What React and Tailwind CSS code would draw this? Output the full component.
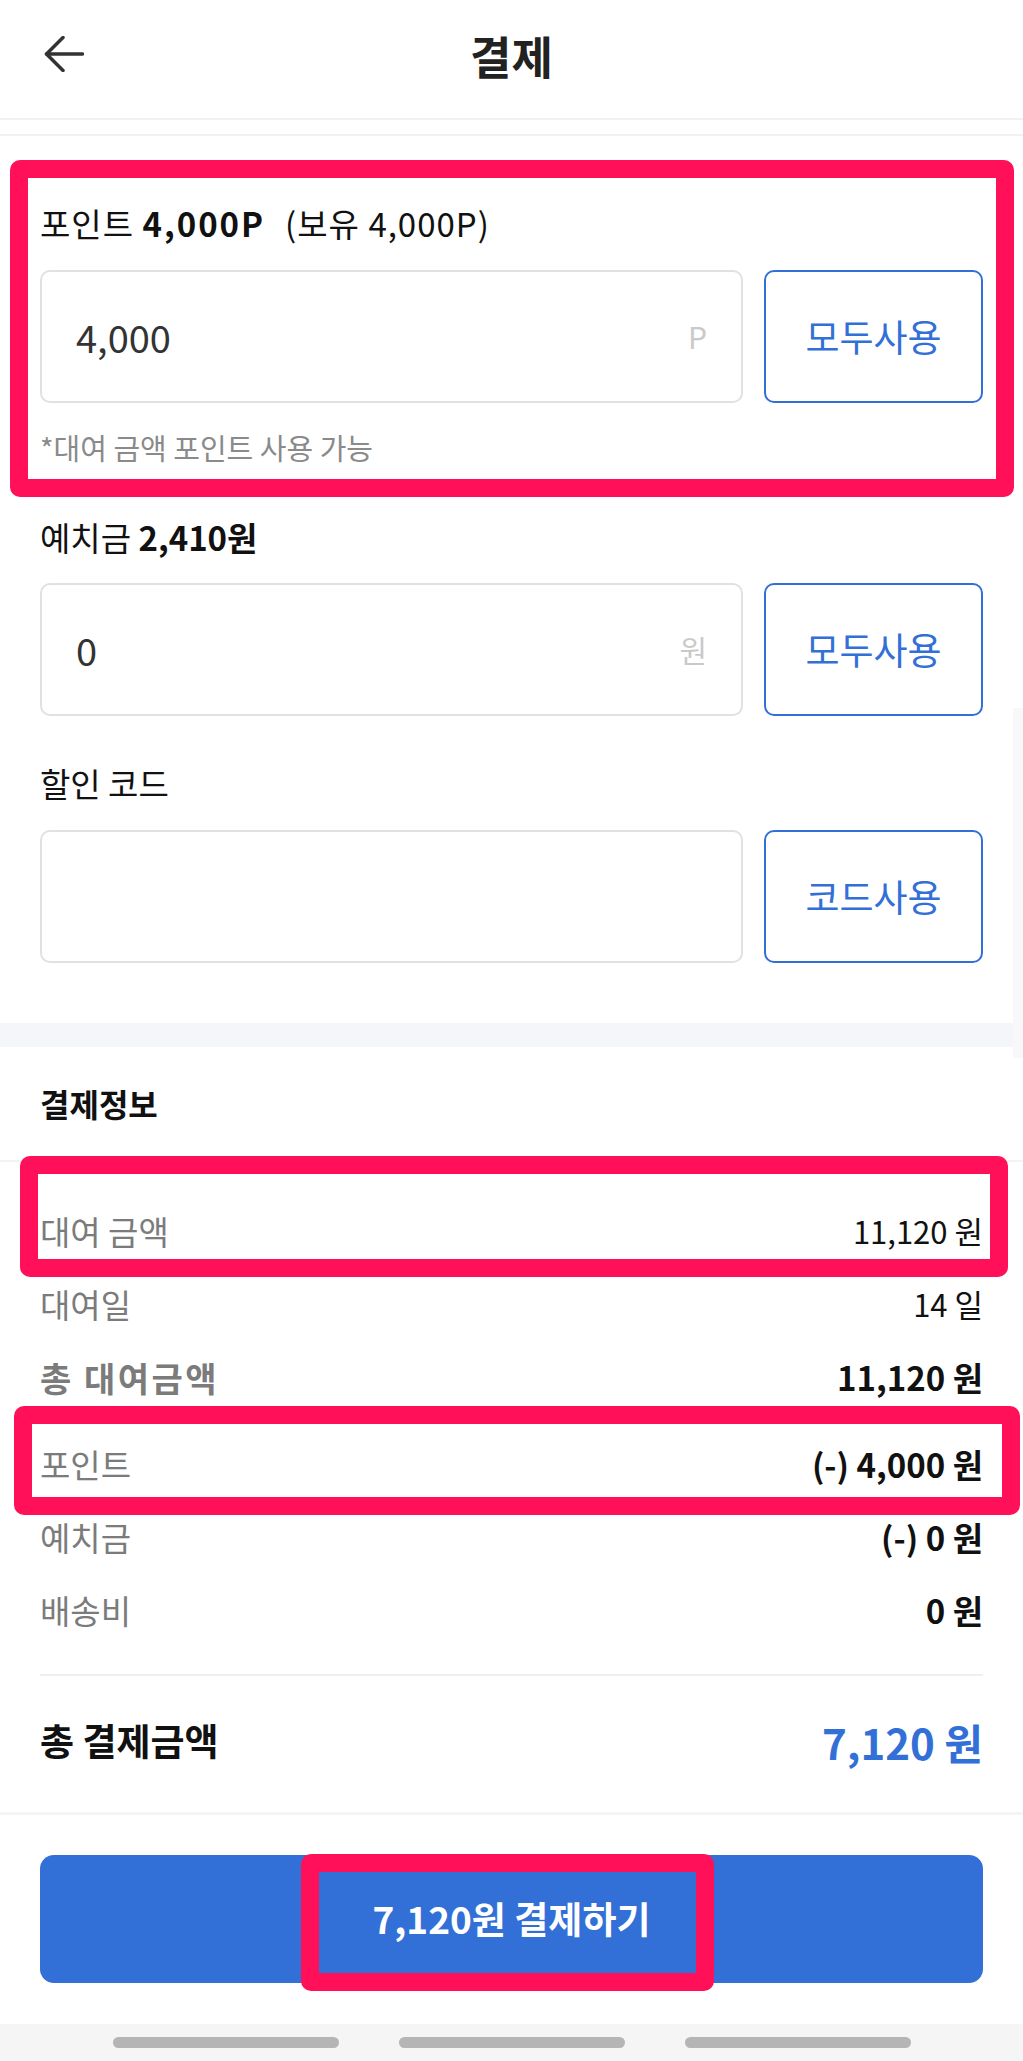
import React from 'react';

function BackArrow() {
    return (
        <svg width="40" height="36" viewBox="0 0 40 36" fill="none" stroke="#333" strokeWidth="3.5" strokeLinecap="round" strokeLinejoin="round">
            <path d="M2.5 18H38.5" />
            <path d="M19 1.5L2.5 18L19 34.5" />
        </svg>
    );
}

function FieldRow({ value, suffix, action }) {
    return (
        <div className="flex gap-[21px]">
            <div className="flex-1 h-[133px] border-2 border-[#e1e1e1] rounded-[10px] px-[34px] flex items-center justify-between">
                <span className="text-[38px] text-[#333]">{value}</span>
                <span className="text-[30px] text-[#c9c9c9]">{suffix}</span>
            </div>
            <button className="w-[219px] h-[133px] border-2 border-[#3270d8] rounded-[10px] text-[37px] text-[#3270d8] bg-white">
                {action}
            </button>
        </div>
    );
}

function Row({ label, value, boldLabel, boldValue, extra }) {
    return (
        <div className={`h-[73px] flex items-center justify-between ${extra || ''}`}>
            <span className={boldLabel ? 'text-[34px] font-bold tracking-[2.5px] text-[#7b7b7b]' : 'text-[33px] text-[#7b7b7b]'}>{label}</span>
            <span className={boldValue ? 'text-[33px] font-bold text-[#111]' : 'text-[31px] text-[#111]'}>{value}</span>
        </div>
    );
}

export default function App() {
    return (
        <div className="relative w-full min-h-[2061px] bg-white font-['Noto_Sans_CJK_KR',sans-serif] text-[#111]">
            {/* header */}
            <header className="h-[120px] border-b-2 border-[#f2f2f2]">
                <div className="h-[106px] grid grid-cols-[1fr_auto_1fr] items-center px-[44px]">
                    <div className="flex items-center pt-[2px]">
                        <BackArrow />
                    </div>
                    <h1 className="text-[45px] font-bold text-[#222] leading-none pt-[4px]">결제</h1>
                    <div />
                </div>
            </header>
            <div className="mt-[14px] h-[2px] bg-[#f2f2f2]" />

            {/* point / deposit / code */}
            <section className="px-10 pt-[67px] pb-[60px]">
                <p className="text-[33px] leading-[40px] tracking-[1px]">
                    포인트 <span className="font-bold tracking-[2px]">4,000P</span>
                    <span className="ml-[20px]">(보유 4,000P)</span>
                </p>
                <div className="mt-[27px]">
                    <FieldRow value="4,000" suffix="P" action="모두사용" />
                </div>
                <p className="mt-[26px] text-[29px] leading-[36px] text-[#8a8a8a]">*대여 금액 포인트 사용 가능</p>

                <p className="mt-[52px] text-[33px] leading-[40px]">
                    예치금 <span className="font-bold">2,410원</span>
                </p>
                <div className="mt-[26px]">
                    <FieldRow value="0" suffix="원" action="모두사용" />
                </div>

                <p className="mt-[47px] text-[33px] leading-[40px]">할인 코드</p>
                <div className="mt-[27px]">
                    <FieldRow value="" suffix="" action="코드사용" />
                </div>
            </section>

            <div className="h-[24px] bg-[#f5f6f9]" />

            {/* payment info */}
            <section>
                <h2 className="px-10 pt-[36px] text-[32px] font-bold leading-[40px]">결제정보</h2>
                <div className="mt-[37px] h-[2px] bg-[#f3f3f3]" />
                <div className="px-10 pt-[33px]">
                    <Row label="대여 금액" value="11,120 원" />
                    <Row label="대여일" value="14 일" />
                    <Row label="총 대여금액" value="11,120 원" boldLabel boldValue />
                    <Row label="포인트" value="(-) 4,000 원" boldValue extra="mt-[14px]" />
                    <Row label="예치금" value="(-) 0 원" boldValue />
                    <Row label="배송비" value="0 원" boldValue />
                    <div className="mt-[27px] h-[2px] bg-[#efefef]" />
                    <div className="mt-[37px] h-[56px] flex items-center justify-between">
                        <span className="text-[37px] font-bold">총 결제금액</span>
                        <span className="text-[42px] font-bold text-[#3270d8]">7,120 원</span>
                    </div>
                </div>
                <div className="mt-[43px] h-[3px] bg-[#f4f4f4]" />
            </section>

            {/* pay button */}
            <div className="px-10 pt-[40px] pb-[41px]">
                <button className="w-full h-[128px] rounded-[14px] bg-[#3270d8] text-white text-[37px] font-bold">
                    7,120원 결제하기
                </button>
            </div>

            {/* system nav */}
            <div className="h-[37px] bg-[#f5f5f5] flex items-center justify-center gap-[60px]">
                <div className="w-[226px] h-[11px] rounded-full bg-[#b5b5b5]" />
                <div className="w-[226px] h-[11px] rounded-full bg-[#b5b5b5]" />
                <div className="w-[226px] h-[11px] rounded-full bg-[#b5b5b5]" />
            </div>

            {/* scroll track */}
            <div className="absolute right-0 top-[708px] w-[10px] h-[350px] bg-[#f8f8fa]" />

            {/* highlight boxes */}
            <div className="absolute left-[10px] top-[160px] w-[1004px] h-[337px] border-[18px] border-[#ff1058] rounded-[10px]" />
            <div className="absolute left-[20px] top-[1156px] w-[988px] h-[121px] border-[18px] border-[#ff1058] rounded-[10px]" />
            <div className="absolute left-[14px] top-[1406px] w-[1006px] h-[109px] border-[18px] border-[#ff1058] rounded-[10px]" />
            <div className="absolute left-[301px] top-[1854px] w-[413px] h-[137px] border-[18px] border-[#ff1058] rounded-[10px]" />
        </div>
    );
}
